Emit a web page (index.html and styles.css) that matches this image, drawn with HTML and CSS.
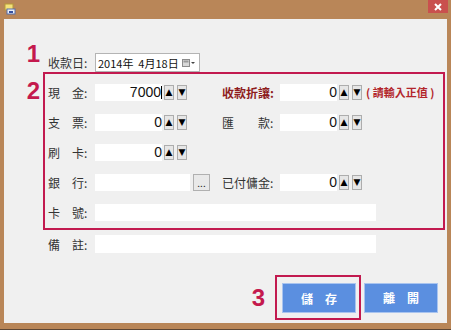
FILE: index.html
```html
<!DOCTYPE html>
<html lang="zh-Hant">
<head>
    <meta charset="UTF-8">
    <title>收款</title>
    <link rel="stylesheet" href="styles.css">
</head>
<body>
    <div class="window">
        <!-- Title bar -->
        <div class="titlebar">
            <svg class="app-icon" width="12" height="12" viewBox="0 0 12 12">
                <rect x="1" y="1" width="8" height="6" fill="#f4e27a" stroke="#b59a3a" stroke-width="1"/>
                <rect x="3" y="6" width="8" height="5" fill="#e9eef7" stroke="#5a6fa8" stroke-width="1"/>
                <rect x="5" y="8" width="4" height="2" fill="#3550a0"/>
            </svg>
            <div class="close-btn">
                <svg width="8" height="8" viewBox="0 0 8 8">
                    <path d="M1 1 L7 7 M7 1 L1 7" stroke="#fff" stroke-width="2"/>
                </svg>
            </div>
        </div>

        <div class="client">
            <!-- Step 1: date -->
            <div class="line line-date">
                <span class="step step-1">1</span>
                <span class="label">收款日:</span>
                <div class="datepicker">
                    <span class="date-text">2014年&nbsp;&nbsp;4月18日</span>
                    <span class="date-drop">
                        <svg width="14" height="10" viewBox="0 0 14 10">
                            <rect x="0.5" y="1.5" width="7" height="7" fill="#d8d8d8" stroke="#8c8c8c"/>
                            <rect x="1.5" y="2.5" width="5" height="2" fill="#9a9a9a"/>
                            <path d="M9 4 L13 4 L11 6 Z" fill="#444"/>
                        </svg>
                    </span>
                </div>
            </div>

            <!-- Step 2: amounts -->
            <div class="line line-box">
                <span class="step step-2">2</span>
                <div class="box">
                    <span class="label">現　金:</span>
                    <div class="num-group">
                        <div class="field num">7000<span class="caret"></span></div>
                        <span class="spin">▲</span><span class="spin">▼</span>
                    </div>
                    <span class="label label-discount">收款折讓:</span>
                    <div class="num-group">
                        <div class="field num num-sm">0</div>
                        <span class="spin">▲</span><span class="spin">▼</span>
                        <span class="hint">( 請輸入正值 )</span>
                    </div>

                    <span class="label">支　票:</span>
                    <div class="num-group">
                        <div class="field num">0</div>
                        <span class="spin">▲</span><span class="spin">▼</span>
                    </div>
                    <span class="label">匯　　款:</span>
                    <div class="num-group">
                        <div class="field num num-sm">0</div>
                        <span class="spin">▲</span><span class="spin">▼</span>
                    </div>

                    <span class="label">刷　卡:</span>
                    <div class="num-group span-3">
                        <div class="field num">0</div>
                        <span class="spin">▲</span><span class="spin">▼</span>
                    </div>

                    <span class="label">銀　行:</span>
                    <div class="num-group">
                        <div class="field field-bank"></div>
                        <span class="browse">...</span>
                    </div>
                    <span class="label">已付傭金:</span>
                    <div class="num-group">
                        <div class="field num num-sm">0</div>
                        <span class="spin">▲</span><span class="spin">▼</span>
                    </div>

                    <span class="label">卡　號:</span>
                    <div class="field field-wide span-3"></div>
                </div>
            </div>

            <!-- Memo -->
            <div class="line line-memo">
                <span class="step"></span>
                <span class="label">備　註:</span>
                <div class="field field-wide"></div>
            </div>

            <!-- Step 3: buttons -->
            <div class="actions">
                <span class="step-3">3</span>
                <div class="highlight">
                    <button class="btn">儲　存</button>
                </div>
                <button class="btn">離　開</button>
            </div>
        </div>
        <div class="bottom-edge"></div>
    </div>
</body>
</html>
```

FILE: styles.css
```css
body {
    margin: 0;
    background-color: #b98658;
    font-family: 'Noto Sans CJK TC', sans-serif;
    font-size: 12px;
    color: #333;
}

.window {
    width: 451px;
    height: 330px;
    display: flex;
    flex-direction: column;
}

/* Title bar */
.titlebar {
    height: 19px;
    display: flex;
    justify-content: space-between;
    align-items: flex-start;
}

.app-icon {
    margin: 3px 0 0 4px;
}

.close-btn {
    width: 20px;
    height: 13px;
    margin-right: 3px;
    background-color: #c9504e;
    display: flex;
    justify-content: center;
    align-items: center;
}

/* Client area */
.client {
    margin: 0 4px;
    height: 304px;
    background-color: #f0f0f0;
    padding-top: 34px;
    box-sizing: border-box;
}

.line {
    display: flex;
}

.step {
    width: 36px;
    padding-right: 3px;
    flex-shrink: 0;
    text-align: right;
    font-family: 'Liberation Sans', Arial, sans-serif;
    font-weight: bold;
    font-size: 24px;
    line-height: 24px;
    color: #c4194d;
}

.label {
    width: 47px;
    flex-shrink: 0;
    line-height: 17px;
    white-space: nowrap;
}

.line-date {
    height: 19px;
    align-items: center;
}

.line-date .label {
    margin-left: 5px;
}

.step-1 {
    align-self: flex-start;
    margin-top: -11px;
}

.datepicker {
    width: 103px;
    height: 17px;
    background: #fff;
    border: 1px solid #b4b4b4;
    display: flex;
    justify-content: space-between;
    align-items: center;
    font-size: 11px;
}

.date-text {
    padding-left: 2px;
    color: #111;
}

.date-drop {
    display: flex;
    padding-right: 3px;
}

/* Boxed amounts */
.step-2 {
    margin-top: 7px;
}

.box {
    width: 402px;
    height: 158px;
    box-sizing: border-box;
    border: 2px solid #c21a4f;
    padding: 3px 0 0 3px;
    display: grid;
    grid-template-columns: 47px 127px 58px auto;
    grid-auto-rows: 30px;
    align-items: center;
}

.label-discount {
    color: #8e1c1c;
    font-weight: bold;
}

.num-group {
    display: flex;
    align-items: center;
}

.span-3 {
    grid-column: span 3;
}

.field {
    height: 17px;
    background: #fff;
}

.num {
    width: 67px;
    box-sizing: border-box;
    text-align: right;
    font-family: 'Liberation Sans', Arial, sans-serif;
    font-size: 14px;
    line-height: 17px;
    color: #111;
    display: flex;
    justify-content: flex-end;
    align-items: center;
}

.num-sm {
    width: 57px;
}

.caret {
    width: 1px;
    height: 13px;
    background: #000;
}

.spin {
    width: 10px;
    height: 15px;
    margin-left: 2px;
    box-sizing: border-box;
    border: 1px solid #adadad;
    background: #e6e6e6;
    font-family: 'DejaVu Sans', sans-serif;
    font-size: 9px;
    line-height: 13px;
    text-align: center;
    color: #000;
}

.spin + .spin {
    margin-left: 3px;
}

.hint {
    margin-left: 4px;
    color: #b3262c;
    font-weight: bold;
    font-size: 11px;
    white-space: nowrap;
}

.field-bank {
    width: 95px;
}

.browse {
    width: 17px;
    height: 17px;
    margin-left: 3px;
    box-sizing: border-box;
    border: 1px solid #b0b0b0;
    background: #e9e9e9;
    font-size: 10px;
    line-height: 16px;
    text-align: center;
    color: #222;
}

.field-wide {
    width: 281px;
}

/* Memo row */
.line-memo {
    height: 28px;
    align-items: center;
}

.line-memo .label {
    margin-left: 5px;
}

.line-memo .field {
    height: 18px;
}

/* Buttons */
.actions {
    margin-top: 17px;
    padding-right: 9px;
    display: flex;
    justify-content: flex-end;
    align-items: center;
}

.step-3 {
    margin-right: 10px;
    font-family: 'Liberation Sans', Arial, sans-serif;
    font-weight: bold;
    font-size: 24px;
    line-height: 24px;
    color: #c4194d;
}

.highlight {
    border: 2px solid #c21a4f;
    padding: 6px 3px 5px 5px;
    margin-right: 3px;
    display: flex;
}

.btn {
    width: 76px;
    height: 30px;
    border: 1px solid #a9c4ef;
    outline: 1px solid #5b8fe0;
    outline-offset: -2px;
    background-color: #5b8fe0;
    color: #fff;
    font-family: 'Noto Sans CJK TC', sans-serif;
    font-size: 12px;
    font-weight: bold;
    padding: 0;
}

.btn:last-child {
    width: 74px;
}

.bottom-edge {
    height: 7px;
    border-bottom: 1px solid #5d4634;
    box-sizing: border-box;
}
```
